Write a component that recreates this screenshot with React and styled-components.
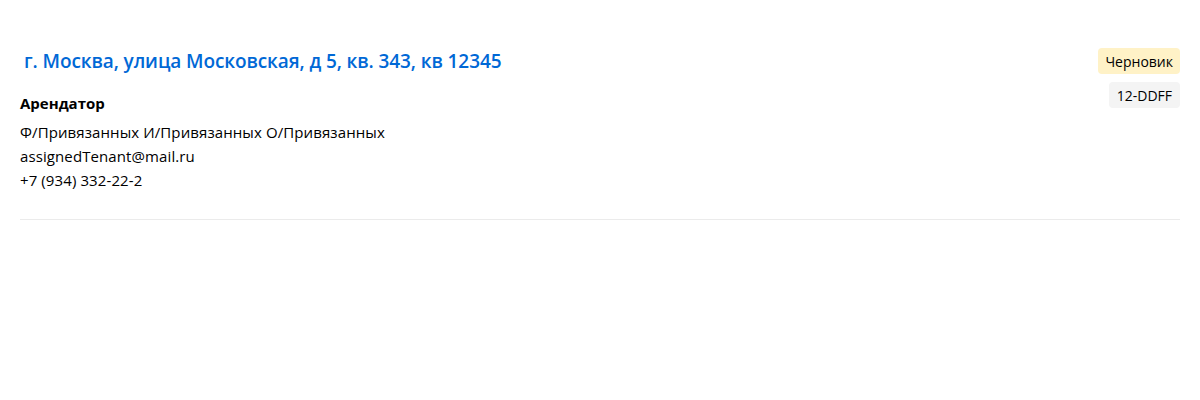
import styled, { createGlobalStyle } from "styled-components";

const GlobalStyle = createGlobalStyle`
  body {
    margin: 0;
    background: #fff;
    font-family: "Open Sans", "Noto Sans", Arial, sans-serif;
    color: #000;
  }
`;

const Card = styled.div`
  margin: 0 20px;
  padding: 48px 0 27px;
  display: flex;
  justify-content: space-between;
  align-items: flex-start;
  border-bottom: 1px solid #ebebeb;
`;

const Info = styled.div`
  display: flex;
  flex-direction: column;
`;

const Address = styled.a`
  padding-left: 4px;
  font-size: 19px;
  font-weight: 600;
  line-height: 26px;
  color: #0068d6;
  text-decoration: none;
  letter-spacing: -0.1px;
`;

const Label = styled.div`
  margin-top: 17px;
  font-size: 15px;
  font-weight: 700;
  line-height: 24px;
`;

const Lines = styled.div`
  margin-top: 5px;
  font-size: 15px;
  line-height: 24px;
  letter-spacing: 0.1px;
`;

const Badges = styled.div`
  display: flex;
  flex-direction: column;
  align-items: flex-end;
  gap: 8px;
`;

const Badge = styled.span`
  padding: 0 ${(p) => (p.$tone === "draft" ? "7px" : "8px")};
  height: 26px;
  display: inline-flex;
  align-items: center;
  border-radius: 4px;
  font-size: 14px;
  background: ${(p) => (p.$tone === "draft" ? "#fff2c7" : "#f4f4f4")};
`;

export default function App() {
  return (
    <>
      <GlobalStyle />
      <Card>
        <Info>
          <Address href="#">г. Москва, улица Московская, д 5, кв. 343, кв 12345</Address>
          <Label>Арендатор</Label>
          <Lines>
            <div>Ф/Привязанных И/Привязанных О/Привязанных</div>
            <div>assignedTenant@mail.ru</div>
            <div>+7 (934) 332-22-2</div>
          </Lines>
        </Info>
        <Badges>
          <Badge $tone="draft">Черновик</Badge>
          <Badge>12-DDFF</Badge>
        </Badges>
      </Card>
    </>
  );
}
